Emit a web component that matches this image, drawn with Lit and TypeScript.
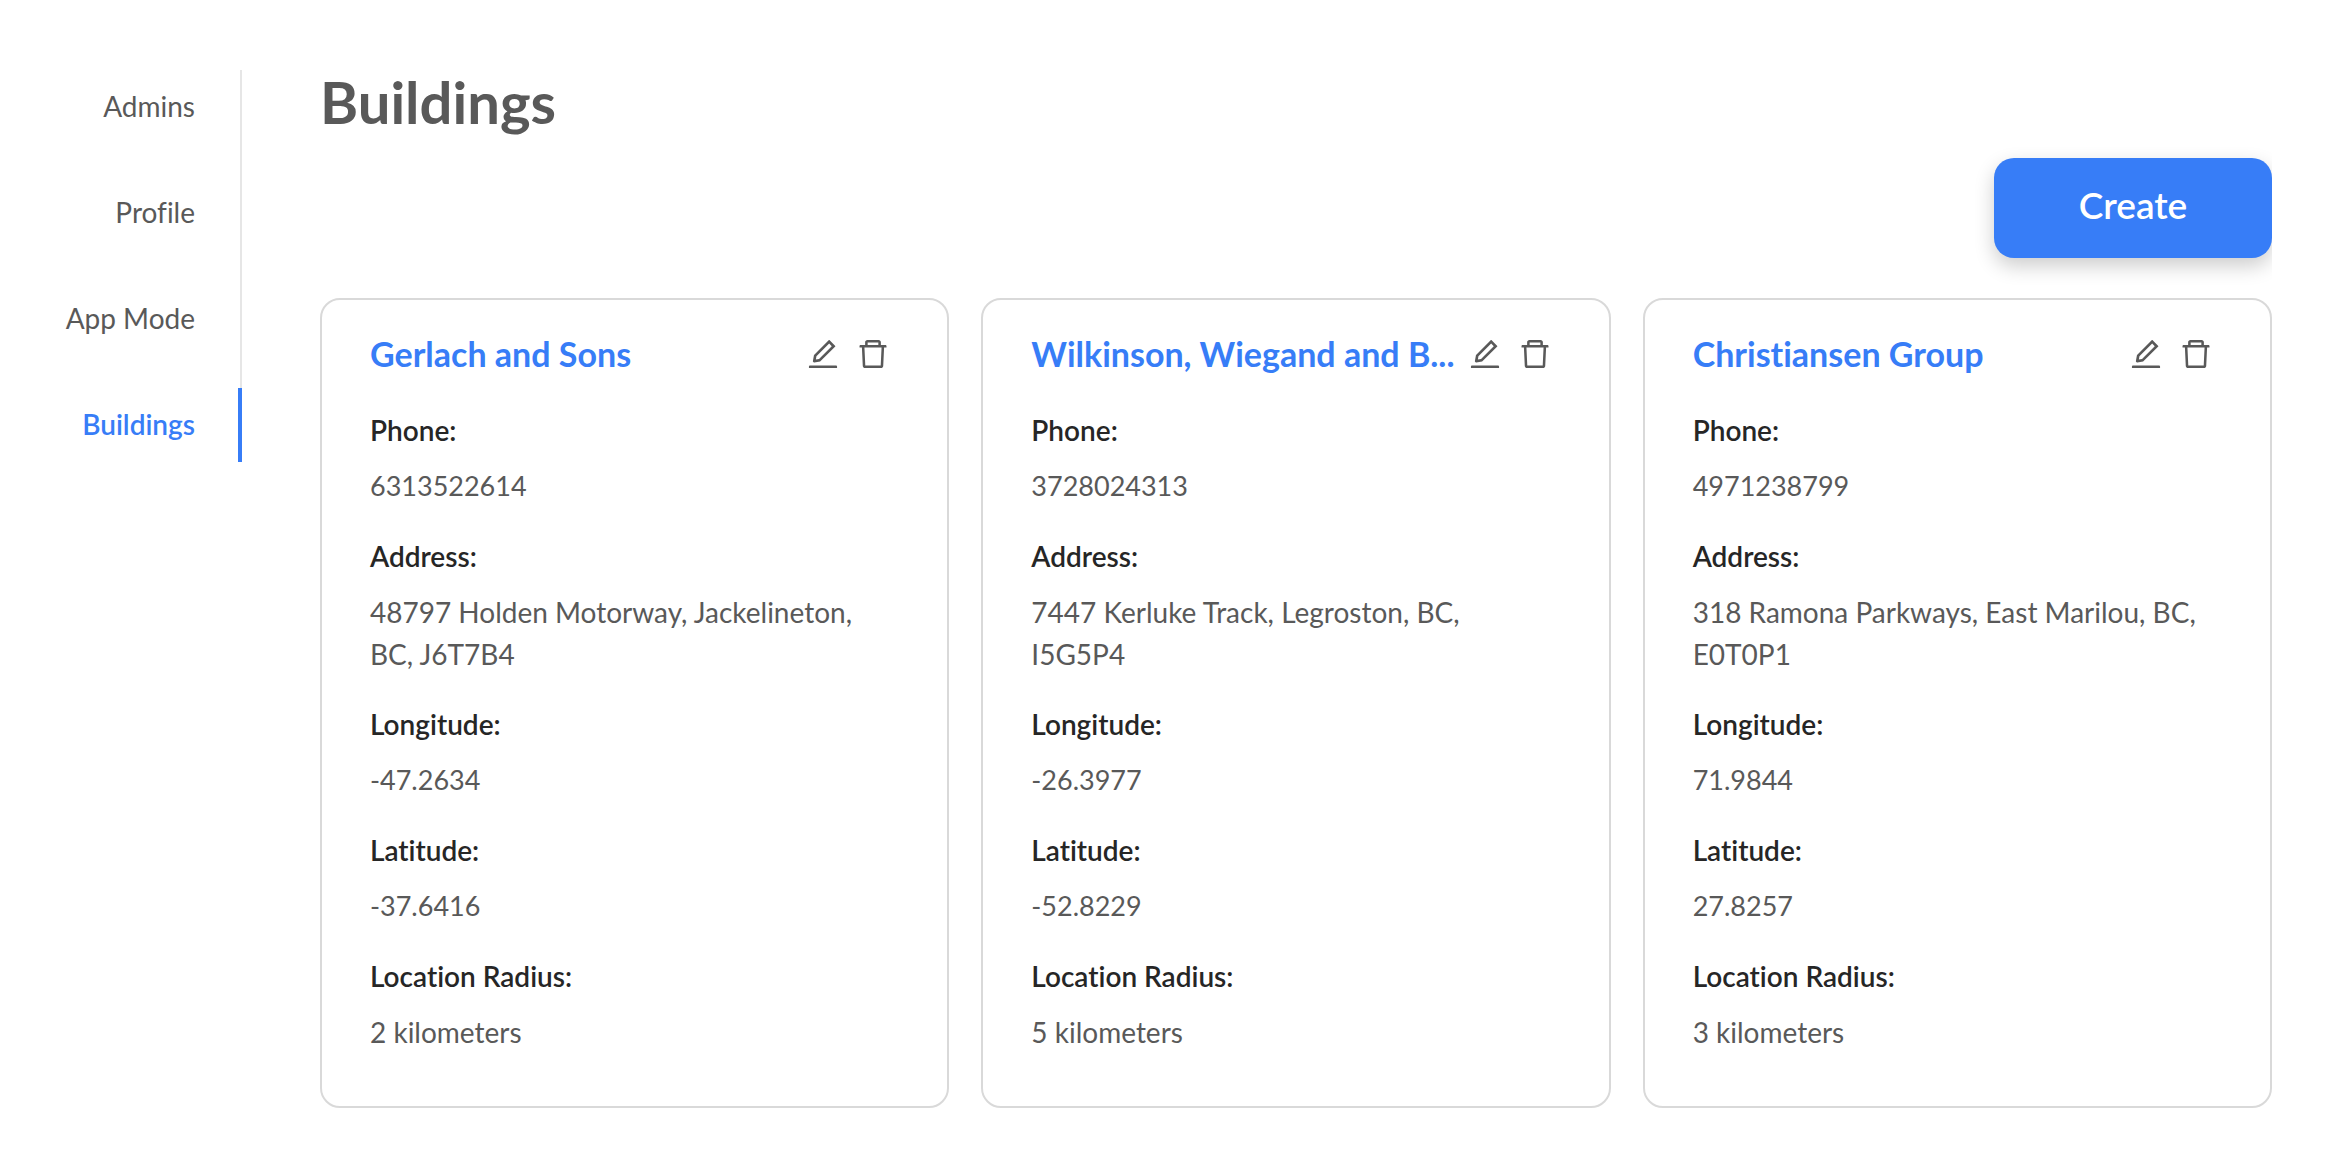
import { LitElement, html, css, svg } from "lit";
import { customElement, property } from "lit/decorators.js";
import { classMap } from "lit/directives/class-map.js";

interface Building {
  name: string;
  phone: string;
  address: string;
  longitude: string;
  latitude: string;
  radius: number;
}

const NAV_ITEMS = ["Admins", "Profile", "App Mode", "Buildings"];

const BUILDINGS: Building[] = [
  {
    name: "Gerlach and Sons",
    phone: "6313522614",
    address: "48797 Holden Motorway, Jackelineton, BC, J6T7B4",
    longitude: "-47.2634",
    latitude: "-37.6416",
    radius: 2,
  },
  {
    name: "Wilkinson, Wiegand and B...",
    phone: "3728024313",
    address: "7447 Kerluke Track, Legroston, BC, I5G5P4",
    longitude: "-26.3977",
    latitude: "-52.8229",
    radius: 5,
  },
  {
    name: "Christiansen Group",
    phone: "4971238799",
    address: "318 Ramona Parkways, East Marilou, BC, E0T0P1",
    longitude: "71.9844",
    latitude: "27.8257",
    radius: 3,
  },
];

const editPath = svg`<path d="M257.7 752c2 0 4-.2 6-.5L431.9 722c2-.4 3.9-1.3 5.3-2.8l423.9-423.9a9.96 9.96 0 000-14.1L694.9 114.9c-1.9-1.9-4.4-2.9-7.1-2.9s-5.2 1-7.1 2.9L256.8 538.8c-1.5 1.5-2.4 3.3-2.8 5.3l-29.5 168.2a33.5 33.5 0 009.4 29.8c6.6 6.4 14.9 9.9 23.8 9.9zm67.4-174.4L687.8 215l73.3 73.3-362.7 362.6-88.9 15.7 15.6-89zM880 836H144c-17.7 0-32 14.3-32 32v36c0 4.4 3.6 8 8 8h784c4.4 0 8-3.6 8-8v-36c0-17.7-14.3-32-32-32z"/>`;

const deletePath = svg`<path d="M360 184h-8c4.4 0 8-3.6 8-8v8h304v-8c0 4.4 3.6 8 8 8h-8v72h72v-80c0-35.3-28.7-64-64-64H352c-35.3 0-64 28.7-64 64v80h72v-72zm504 72H160c-17.7 0-32 14.3-32 32v32c0 4.4 3.6 8 8 8h60.4l24.7 523c1.6 34.1 29.8 61 63.9 61h454c34.2 0 62.3-26.8 63.9-61l24.7-523H888c4.4 0 8-3.6 8-8v-32c0-17.7-14.3-32-32-32zM731.3 840H292.7l-24.2-512h487l-24.2 512z"/>`;

@customElement("building-card")
export class BuildingCard extends LitElement {
  @property({ attribute: false }) building!: Building;

  static styles = css`
    :host {
      display: block;
      box-sizing: border-box;
      min-width: 0;
      padding: 30px 48px 53px;
      border: 2px solid #d9d9d9;
      border-radius: 20px;
    }
    .head {
      display: flex;
      align-items: center;
      justify-content: space-between;
      gap: 8px;
      margin-bottom: 31px;
    }
    .name {
      margin: 0;
      min-width: 0;
      overflow: hidden;
      white-space: nowrap;
      text-overflow: ellipsis;
      font-size: 34px;
      line-height: 48px;
      font-weight: 700;
      color: #377df7;
    }
    .actions {
      display: flex;
      flex: none;
      gap: 14px;
      padding-right: 8px;
    }
    .action {
      display: block;
      padding: 0;
      border: 0;
      background: none;
      color: #595959;
      cursor: pointer;
    }
    .icon {
      display: block;
      width: 36px;
      height: 36px;
      fill: currentColor;
    }
    .fields {
      display: grid;
      gap: 28px;
      margin: 0;
      padding-right: 8px;
    }
    .field {
      display: grid;
      gap: 14px;
    }
    .label {
      font-weight: 600;
      color: #262626;
    }
    .value {
      margin: 0;
    }
    .value.numeric {
      font-size: 27px;
    }
  `;

  private field(label: string, value: string) {
    const numeric = /^[-\d.]+$/.test(value);
    return html`<div class="field">
      <dt class="label">${label}:</dt>
      <dd class=${classMap({ value: true, numeric })}>${value}</dd>
    </div>`;
  }

  render() {
    const b = this.building;
    return html`
      <div class="head">
        <h2 class="name">${b.name}</h2>
        <div class="actions">
          <button class="action" type="button" aria-label="Edit">
            <svg class="icon" viewBox="0 0 1024 1024" aria-hidden="true">${editPath}</svg>
          </button>
          <button class="action" type="button" aria-label="Delete">
            <svg class="icon" viewBox="0 0 1024 1024" aria-hidden="true">${deletePath}</svg>
          </button>
        </div>
      </div>
      <dl class="fields">
        ${this.field("Phone", b.phone)} ${this.field("Address", b.address)}
        ${this.field("Longitude", b.longitude)} ${this.field("Latitude", b.latitude)}
        ${this.field("Location Radius", `${b.radius} kilometers`)}
      </dl>
    `;
  }
}

@customElement("app-root")
export class AppRoot extends LitElement {
  static styles = css`
    :host {
      display: grid;
      grid-template-columns: 242px minmax(0, 1fr);
      column-gap: 78px;
      align-items: start;
      box-sizing: border-box;
      padding: 66px 60px 0 0;
      background: #fff;
      color: #595959;
      font-family: Lato, "Liberation Sans", sans-serif;
      font-size: 28px;
      line-height: 42px;
      font-variant-ligatures: no-common-ligatures;
    }
    .nav {
      display: grid;
      gap: 32px;
      margin-top: 4px;
      background: linear-gradient(#e6e6e6, #e6e6e6) right / 2px 100% no-repeat;
    }
    .link {
      padding: 15px 43px 17px 0;
      border-right: 4px solid transparent;
      color: inherit;
      text-align: right;
      text-decoration: none;
    }
    .link.active {
      border-right-color: #377df7;
      color: #377df7;
      font-weight: 600;
    }
    .main {
      overflow: hidden;
    }
    .title {
      margin: 0;
      font-size: 58px;
      line-height: 72px;
      font-weight: 700;
    }
    .toolbar {
      display: flex;
      justify-content: flex-end;
      padding: 20px 0 40px;
    }
    .create {
      min-width: 278px;
      padding: 23px 48px 29px;
      border: 0;
      border-radius: 20px;
      background: #377df7;
      box-shadow: 0 8px 20px rgba(0, 0, 0, 0.2);
      color: #fff;
      font: 600 37px/48px Lato, "Liberation Sans", sans-serif;
      cursor: pointer;
    }
    .cards {
      display: grid;
      grid-template-columns: repeat(3, minmax(0, 1fr));
      gap: 32px;
    }
  `;

  render() {
    return html`
      <nav class="nav">
        ${NAV_ITEMS.map((item) => {
          const active = item === "Buildings";
          return html`<a class=${classMap({ link: true, active })} href="#">${item}</a>`;
        })}
      </nav>
      <main class="main">
        <h1 class="title">Buildings</h1>
        <div class="toolbar">
          <button class="create" type="button">Create</button>
        </div>
        <div class="cards">
          ${BUILDINGS.map((b) => html`<building-card .building=${b}></building-card>`)}
        </div>
      </main>
    `;
  }
}
